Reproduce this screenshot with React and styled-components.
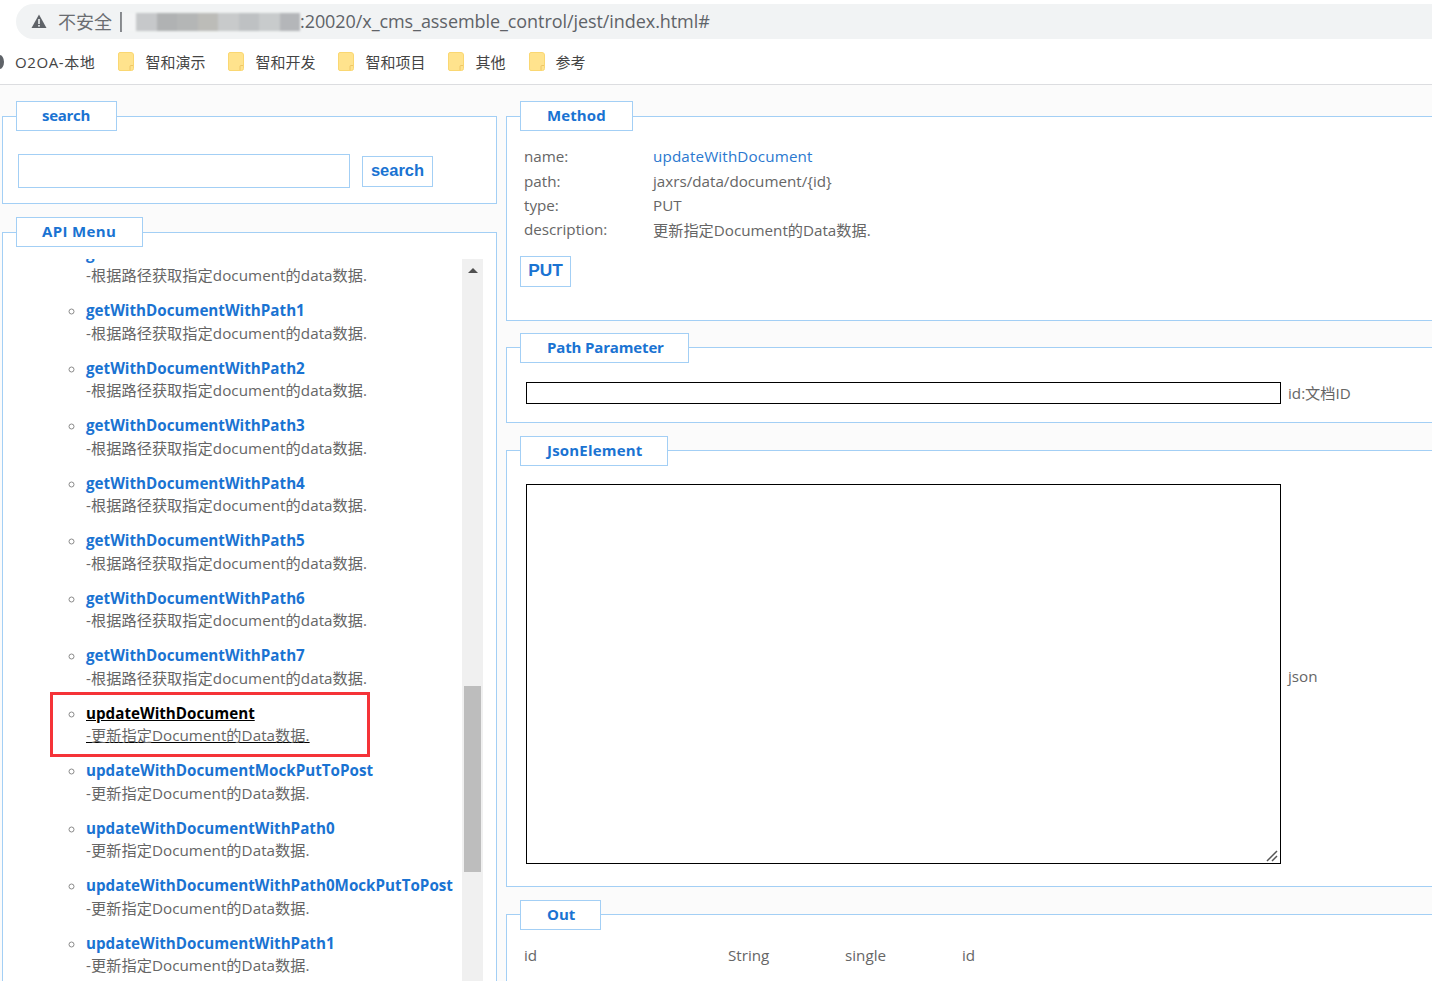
import React from "react";
import styled, { createGlobalStyle } from "styled-components";

const FONT = `"Open Sans", "Noto Sans CJK SC", sans-serif`;
const BLUE = "#1a73d2";
const LINE = "#a3cff5";
const TEXT = "#666666";

const Global = createGlobalStyle`
  html, body { margin: 0; padding: 0; height: 100%; overflow: hidden; background: #fff; }
  body { font-family: ${FONT}; font-size: 15.2px; color: ${TEXT}; }
  * { box-sizing: border-box; }
`;

const Page = styled.div`
  width: 1432px;
  height: 981px;
  overflow: hidden;
  display: flex;
  flex-direction: column;
`;
const Chrome = styled.header`
  height: 85px;
  flex: none;
  padding-top: 4px;
  background: #fff;
  border-bottom: 1px solid #dcdde0;
`;
const AddressBar = styled.div`
  height: 35px;
  margin: 0 -30px 0 16px;
  padding-left: 15px;
  display: flex;
  align-items: center;
  background: #f1f3f4;
  border-radius: 18px;
  font-size: 18px;
  color: #5f6368;
`;
const Insecure = styled.span`
  margin: -2px 0 0 11px;
  font-size: 18px;
  color: #6a6d71;
`;
const Divider = styled.i`
  width: 2px;
  height: 20px;
  margin: 0 1px 0 8px;
  background: #85888c;
`;
const Masked = styled.div`
  width: 177px;
  height: 18px;
  display: flex;
  filter: blur(1.2px);
`;
const MaskCell = styled.i`
  flex: 1;
  background: ${(p) => p.$c};
  &:first-child {
    flex: 0 0 13px;
  }
`;
const Url = styled.span`
  margin-top: -2px;
  letter-spacing: -0.07px;
  color: #5f6368;
  white-space: nowrap;
`;
const Bookmarks = styled.nav`
  height: 45px;
  padding-left: 15px;
  display: flex;
  align-items: center;
  gap: 22px;
  position: relative;
  font-size: 15px;
  color: #444;
`;
const GlobeEdge = styled.i`
  position: absolute;
  left: -5px;
  top: 16px;
  width: 9px;
  height: 14px;
  border-radius: 50%;
  background: #5f6368;
`;
const Bookmark = styled.span`
  display: flex;
  align-items: center;
  gap: 11px;
  white-space: nowrap;
  letter-spacing: ${(p) => p.$ls || 0}px;
`;
const Main = styled.main`
  flex: 1;
  min-height: 0;
  overflow: hidden;
  padding: 16px 0 0 2px;
  display: flex;
  gap: 9px;
  background: #fbfbfb;
`;
const Column = styled.div`
  flex: none;
  width: ${(p) => p.$w}px;
  display: flex;
  flex-direction: column;
  gap: ${(p) => p.$gap}px;
`;
const Panel = styled.fieldset`
  margin: ${(p) => p.$mt || 0}px 0 0;
  padding: ${(p) => p.$pad};
  min-width: 0;
  background: #fff;
  border: 1px solid ${LINE};
`;
const Legend = styled.legend`
  margin: 0 0 ${(p) => p.$mb || 0}px 13px;
  width: ${(p) => p.$w}px;
  height: 30px;
  padding: 0 0 0 ${(p) => p.$pl}px;
  line-height: 27px;
  letter-spacing: ${(p) => p.$ls || 0}px;
  background: #fff;
  border: 1px solid ${LINE};
  font-size: 15px;
  font-weight: 700;
  color: ${BLUE};
  white-space: nowrap;
`;
const SearchRow = styled.div`
  display: flex;
  align-items: flex-start;
  gap: 12px;
  padding-left: 15px;
`;
const SearchInput = styled.input`
  width: 332px;
  height: 34px;
  background: #fff;
  border: 1px solid ${LINE};
  outline: none;
`;
const BlueButton = styled.button`
  display: block;
  width: ${(p) => p.$w}px;
  height: 31px;
  margin: ${(p) => p.$margin};
  padding: 0 0 2px;
  background: #fff;
  border: 1px solid ${LINE};
  font-family: "Liberation Sans", sans-serif;
  font-size: ${(p) => p.$size}px;
  font-weight: 700;
  color: ${BLUE};
`;
const MenuBody = styled.div`
  display: flex;
  height: 722px;
`;
const MenuClip = styled.div`
  flex: none;
  width: 459px;
  height: 100%;
  overflow: hidden;
`;
const MenuList = styled.ul`
  margin: -17.5px 0 0;
  padding: 0 0 0 83px;
  list-style: none;
`;
const MenuItem = styled.li`
  position: relative;
  height: 57.5px;
  line-height: 22.5px;
  list-style: circle;
  color: #8a8a8a;
  ${(p) => p.$active && `text-decoration: underline; text-decoration-color: #000;`}
`;
const MenuTitle = styled.a`
  display: block;
  font-size: 15.2px;
  font-weight: 700;
  white-space: nowrap;
  color: ${(p) => (p.$active ? "#000" : BLUE)};
`;
const MenuDesc = styled.span`
  display: block;
  font-size: 15.2px;
  letter-spacing: 0.05px;
  white-space: nowrap;
  color: ${TEXT};
`;
const Highlight = styled.i`
  position: absolute;
  left: -36px;
  top: -10px;
  width: 320px;
  height: 65px;
  border: 3px solid #f53338;
  pointer-events: none;
`;
const Track = styled.div`
  position: relative;
  flex: none;
  width: 21px;
  height: 100%;
  background: #f0f0f0;
`;
const Arrow = styled.i`
  position: absolute;
  left: 6px;
  top: 9px;
  border: 5px solid transparent;
  border-top: 0;
  border-bottom-color: #505050;
`;
const Thumb = styled.i`
  position: absolute;
  left: 2px;
  top: 427px;
  width: 17px;
  height: 186px;
  background: #bdbdbd;
`;
const MethodGrid = styled.div`
  display: grid;
  grid-template-columns: 129px 1fr;
  grid-auto-rows: 24.4px;
  align-items: center;
  padding: 14px 0 0 17px;
  white-space: nowrap;
`;
const MethodName = styled.span`
  letter-spacing: 0.15px;
  color: #2a78cf;
`;
const ParamRow = styled.div`
  display: flex;
  align-items: center;
  gap: 7px;
  padding-left: 19px;
`;
const ParamNote = styled.span`
  padding: ${(p) => p.$pad};
  white-space: nowrap;
`;
const BlackInput = styled.input`
  flex: none;
  width: 755px;
  height: 22px;
  background: #fff;
  border: 1px solid #000;
  border-radius: 0;
  outline: none;
`;
const AreaWrap = styled.div`
  position: relative;
  flex: none;
  width: 755px;
  height: 380px;
`;
const BlackArea = styled.textarea`
  display: block;
  width: 100%;
  height: 100%;
  background: #fff;
  border: 1px solid #000;
  border-radius: 0;
  outline: none;
  resize: none;
`;
const Grip = styled.svg`
  position: absolute;
  right: 3px;
  bottom: 2px;
`;
const OutRow = styled.div`
  display: grid;
  grid-template-columns: 204px 117px 117px 1fr;
  padding: 15px 0 0 17px;
`;

const Folder = () => (
  <svg width="17" height="19" viewBox="-1 0 17 19">
    <path d="M.5 2 Q.5 .5 2 .5 H13 Q15.500 .5 15.500 3 V16.500 Q15.500 18.500 13.500 18.500 H2 Q.5 18.500 .5 17Z" fill="#ffe38d" stroke="#fad772" />
    <path d="M12 18 V14.500 Q12 13.500 13 13.500 H15" fill="none" stroke="#eec666" />
  </svg>
);

const Warn = () => (
  <svg width="16" height="15" viewBox="0 0 16 15">
    <path d="M8 .5 L15.500 14 H.5Z" fill="#5f6368" />
    <rect x="7.200" y="5" width="1.600" height="5" fill="#f1f3f4" />
    <rect x="7.200" y="11" width="1.600" height="1.600" fill="#f1f3f4" />
  </svg>
);

const PATH_DESC = "-根据路径获取指定document的data数据.";
const UPDATE_DESC = "-更新指定Document的Data数据.";
const items = [
  ["getWithDocumentWithPath0", PATH_DESC],
  ["getWithDocumentWithPath1", PATH_DESC],
  ["getWithDocumentWithPath2", PATH_DESC],
  ["getWithDocumentWithPath3", PATH_DESC],
  ["getWithDocumentWithPath4", PATH_DESC],
  ["getWithDocumentWithPath5", PATH_DESC],
  ["getWithDocumentWithPath6", PATH_DESC],
  ["getWithDocumentWithPath7", PATH_DESC],
  ["updateWithDocument", UPDATE_DESC, true],
  ["updateWithDocumentMockPutToPost", UPDATE_DESC],
  ["updateWithDocumentWithPath0", UPDATE_DESC],
  ["updateWithDocumentWithPath0MockPutToPost", UPDATE_DESC],
  ["updateWithDocumentWithPath1", UPDATE_DESC],
];
const mask = ["#f3f4f5", "#c6c8ca", "#b0b2b3", "#b4b6b6", "#bcbcb8", "#c8cacb", "#bec1c3", "#c8cbcc", "#b4b6b9"];

export default function App() {
  return (
    <Page>
      <Global />
      <Chrome>
        <AddressBar>
          <Warn />
          <Insecure>不安全</Insecure>
          <Divider />
          <Masked>
            {mask.map((c, i) => (
              <MaskCell key={i} $c={c} />
            ))}
          </Masked>
          <Url>:20020/x_cms_assemble_control/jest/index.html#</Url>
        </AddressBar>
        <Bookmarks>
          <GlobeEdge />
          <Bookmark $ls={0.6}>O2OA-本地</Bookmark>
          {["智和演示", "智和开发", "智和项目", "其他", "参考"].map((t) => (
            <Bookmark key={t}>
              <Folder />
              {t}
            </Bookmark>
          ))}
        </Bookmarks>
      </Chrome>
      <Main>
        <Column $w={495} $gap={13}>
          <Panel $pad="24px 0 15px 0">
            <Legend $w={101} $pl={25} $mb={-1} $ls={-0.3}>search</Legend>
            <SearchRow>
              <SearchInput />
              <BlueButton $w={71} $size={16.5} $margin="2px 0 0">search</BlueButton>
            </SearchRow>
          </Panel>
          <Panel $pad="13px 13px 0 0">
            <Legend $w={127} $pl={25} $mb={-1} $ls={0.35}>API Menu</Legend>
            <MenuBody>
              <MenuClip>
                <MenuList>
                  {items.map(([name, desc, active]) => (
                    <MenuItem key={name} $active={active}>
                      <MenuTitle $active={active}>{name}</MenuTitle>
                      <MenuDesc>{desc}</MenuDesc>
                      {active && <Highlight />}
                    </MenuItem>
                  ))}
                </MenuList>
              </MenuClip>
              <Track>
                <Arrow />
                <Thumb />
              </Track>
            </MenuBody>
          </Panel>
        </Column>
        <Column $w={1000} $gap={12}>
          <Panel $pad="0 0 33px 0">
            <Legend $w={113} $pl={26} $mb={-1} $ls={0.1}>Method</Legend>
            <MethodGrid>
              <span>name:</span>
              <MethodName>updateWithDocument</MethodName>
              <span>path:</span>
              <span>jaxrs/data/document/{"{id}"}</span>
              <span>type:</span>
              <span>PUT</span>
              <span>description:</span>
              <span>更新指定Document的Data数据.</span>
            </MethodGrid>
            <BlueButton $w={51} $size={17.3} $margin="14px 0 0 13px">PUT</BlueButton>
          </Panel>
          <Panel $pad="17px 0 17px 0">
            <Legend $w={169} $pl={26} $mb={1} $ls={-0.15}>Path Parameter</Legend>
            <ParamRow>
              <BlackInput />
              <ParamNote $pad="0 0 2px">id:文档ID</ParamNote>
            </ParamRow>
          </Panel>
          <Panel $pad="18px 0 22px 0" $mt={1}>
            <Legend $w={148} $pl={26} $ls={0.2}>JsonElement</Legend>
            <ParamRow>
              <AreaWrap>
                <BlackArea />
                <Grip width="12" height="12" viewBox="0 0 12 12">
                  <path d="M1 11 L11 1 M6 11 L11 6" stroke="#555" strokeWidth="1.500" fill="none" />
                </Grip>
              </AreaWrap>
              <ParamNote $pad="4px 0 0">json</ParamNote>
            </ParamRow>
          </Panel>
          <Panel $pad="0 0 20px 0" $mt={1}>
            <Legend $w={81} $pl={26}>Out</Legend>
            <OutRow>
              <span>id</span>
              <span>String</span>
              <span>single</span>
              <span>id</span>
            </OutRow>
          </Panel>
        </Column>
      </Main>
    </Page>
  );
}
